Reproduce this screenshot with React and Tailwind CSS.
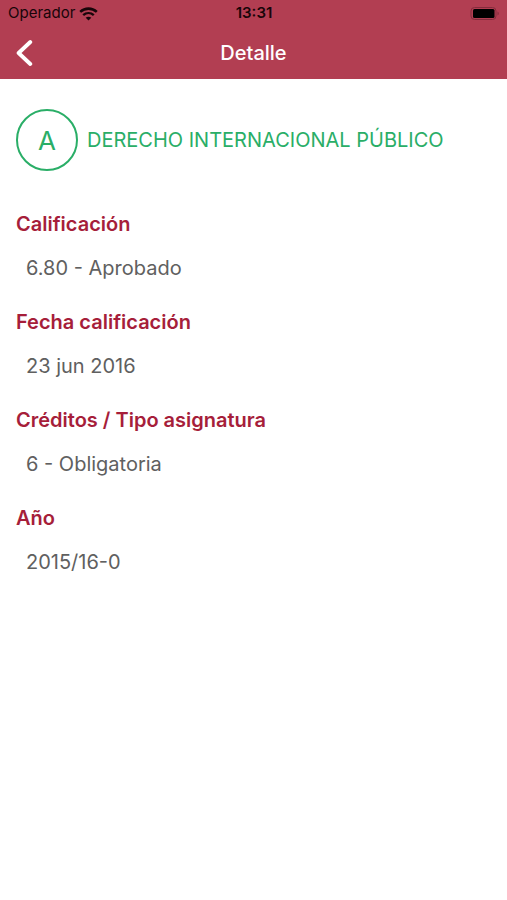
const details = [
  { label: "Calificación", value: "6.80 - Aprobado" },
  { label: "Fecha calificación", value: "23 jun 2016" },
  { label: "Créditos / Tipo asignatura", value: "6 - Obligatoria" },
  { label: "Año", value: "2015/16-0" },
];

function WifiIcon() {
  return (
    <svg className="h-[14px] w-[19px]" viewBox="0 0 19 14" fill="none" stroke="#180509" aria-hidden="true">
      <path d="M1.2 4.9C6 .5 13 .5 17.8 4.9" strokeWidth="2.6" />
      <path d="M4.2 8.2C7.3 5.4 11.7 5.4 14.8 8.2" strokeWidth="2.4" />
      <path d="M9.5 13.6 6.7 10.7C8.3 9.3 10.7 9.3 12.3 10.7Z" fill="#180509" stroke="none" />
    </svg>
  );
}

function BatteryIcon() {
  return (
    <svg className="h-[13px] w-[30px]" viewBox="0 0 30 13" aria-hidden="true">
      <rect x="1" y="0.5" width="25" height="12" rx="3.5" fill="none" stroke="#842c3c" />
      <rect x="3" y="2" width="21.5" height="9" rx="1.5" fill="#000000" />
      <path d="M27.5 4.5C29.2 5.2 29.2 7.8 27.5 8.5Z" fill="#842c3c" />
    </svg>
  );
}

export default function App() {
  return (
    <div className="min-h-screen bg-white font-['Inter','Liberation_Sans',sans-serif]">
      <header className="bg-[#b23e52]">
        <div className="grid h-[27px] grid-cols-3 items-center pr-[7px] pl-[8px] text-[#180509]">
          <div className="flex items-center gap-1">
            <span className="text-[15px]">Operador</span>
            <WifiIcon />
          </div>
          <span className="text-center text-[15px] font-semibold">13:31</span>
          <div className="flex justify-end">
            <BatteryIcon />
          </div>
        </div>
        <div className="grid h-[52px] grid-cols-3 items-center px-4 text-white">
          <button type="button" aria-label="Volver" className="w-4">
            <svg className="h-[28px] w-[18px]" viewBox="0 0 18 28" fill="none" stroke="white" strokeWidth="3.8" strokeLinecap="round" strokeLinejoin="round" aria-hidden="true">
              <path d="M14.3 3 2.6 14 14.3 25" />
            </svg>
          </button>
          <h1 className="text-center text-[20px] font-medium">Detalle</h1>
        </div>
      </header>
      <main className="px-4 pt-[30px]">
        <div className="flex items-center gap-[9px] text-[#2aae67]">
          <span className="flex size-[62px] shrink-0 items-center justify-center rounded-full border-2 border-[#2aae67] text-[26px]">A</span>
          <h2 className="text-[20px]">DERECHO INTERNACIONAL PÚBLICO</h2>
        </div>
        <dl className="pt-[31px]">
          {details.map(({ label, value }) => (
            <div key={label} className="h-[98px]">
              <dt className="text-[20px] leading-[44px] font-semibold text-[#a61e3a]">{label}</dt>
              <dd className="pl-[10px] text-[20px] leading-[44px] text-[#606060]">{value}</dd>
            </div>
          ))}
        </dl>
      </main>
    </div>
  );
}
